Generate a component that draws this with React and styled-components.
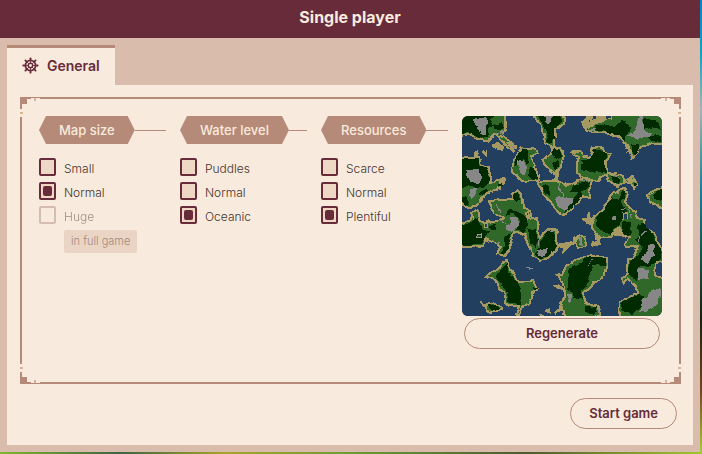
import React, { useState } from 'react';
import styled, { createGlobalStyle } from 'styled-components';

const GlobalStyle = createGlobalStyle`
    * {
        box-sizing: border-box;
    }
    body {
        margin: 0;
        font-family: Inter, "Liberation Sans", sans-serif;
        color: #45342f;
    }
`
const Scene = styled.div`
    display: flex;
    min-height: 100vh;
    padding: 0 2px 2px 0;
    background:
        linear-gradient(90deg, #83b52e, #3f6241 17%, #a7a52b 32%, #6f9a36 50%, #4c5a30 75%, #a3c62c) bottom / 100% 2px no-repeat,
        linear-gradient(#0087c5, #12a3bd 12%, #a3b4b9 24%, #177f95 42%, #14230f 70%, #71451c 86%, #a8cf3e);
`
const Dialog = styled.div`
    display: flex;
    flex-direction: column;
    flex: 1;
    background: #d9bcab;
`
const TitleBar = styled.header`
    display: flex;
    justify-content: center;
    height: 38px;
    background: #672b3a;
`
const Title = styled.h1`
    margin: 0;
    font-size: 16px;
    line-height: 34px;
    font-weight: 700;
    color: #f8eadd;
`
const Body = styled.main`
    display: flex;
    flex-direction: column;
    flex: 1;
    padding: 7px;
`
const Tab = styled.button`
    display: flex;
    align-items: center;
    align-self: flex-start;
    gap: 8px;
    height: 40px;
    padding: 0 15px 2px;
    border: 0;
    border-top: 3px solid #b68a78;
    background: #f8eadd;
    color: #672b3a;
    font: inherit;
    font-size: 14px;
    font-weight: 600;
`
const Panel = styled.section`
    display: flex;
    flex-direction: column;
    flex: 1;
    gap: 14px;
    padding: 12px 12px 16px 13px;
    background: #f8eadd;
`
const Frame = styled.div`
    position: relative;
    flex: 1;
    padding: 17px;
    border: 2px solid #b68a78;
`
const Corner = styled.svg`
    position: absolute;
    width: 20px;
    height: 20px;
    top: ${props => props.$bottom ? 'auto' : '-2px'};
    bottom: ${props => props.$bottom ? '-2px' : 'auto'};
    left: ${props => props.$right ? 'auto' : '-2px'};
    right: ${props => props.$right ? '-2px' : 'auto'};
    transform: scale(${props => props.$right ? -1 : 1}, ${props => props.$bottom ? -1 : 1});
`
const Settings = styled.div`
    display: grid;
    grid-template-columns: repeat(3, 1fr) 200px;
    gap: 14px;
`
const Group = styled.fieldset`
    min-width: 0;
    margin: 0;
    padding: 0;
    border: 0;
`
const Legend = styled.legend`
    display: flex;
    align-items: center;
    width: 100%;
    margin-bottom: 14px;
    padding: 0;
    &::after {
        content: '';
        flex: 1;
        height: 1px;
        background: #b68a78;
    }
`
const LegendText = styled.span`
    padding: 0 20px;
    font-size: 13px;
    line-height: 28px;
    font-weight: 500;
    white-space: nowrap;
    color: #f8eadd;
    background: #b68a78;
    clip-path: polygon(7px 0, calc(100% - 7px) 0, 100% 50%, calc(100% - 7px) 100%, 7px 100%, 0 50%);
`
const Options = styled.div`
    display: flex;
    flex-direction: column;
    align-items: flex-start;
    gap: 6px;
`
const Option = styled.label`
    display: flex;
    align-items: center;
    gap: 8px;
    height: 18px;
    font-size: 12px;
    font-weight: 300;
    opacity: ${props => props.$disabled ? 0.5 : 1};
`
const OptionText = styled.span`
    padding-top: 2px;
`
const Radio = styled.input`
    appearance: none;
    display: grid;
    place-content: center;
    width: 17px;
    height: 18px;
    margin: 0;
    border: 2px solid #672b3a;
    border-radius: 2px;
    background: #eed7c5;
    &:checked::before {
        content: '';
        width: 9px;
        height: 10px;
        border-radius: 2px;
        background: #672b3a;
    }
    &:disabled {
        border-color: #b48d90;
        background: #f8eadd;
    }
`
const Note = styled.span`
    margin-left: 25px;
    padding: 0 7px;
    border-radius: 2px;
    font-size: 11px;
    line-height: 23px;
    font-weight: 300;
    color: #a08a7d;
    background: #ead5c4;
`
const Preview = styled.div`
    display: flex;
    flex-direction: column;
    gap: 2px;
`
const MapImage = styled.svg`
    display: block;
    width: 100%;
    border-radius: 6px;
    background: #233f60;
`
const PillButton = styled.button`
    height: 31px;
    margin: 0 ${props => props.$wide ? '2px' : '4px'};
    padding: 0 18px 2px;
    border: 1px solid #b68a78;
    border-radius: 16px;
    background: transparent;
    color: #672b3a;
    font: inherit;
    font-size: 13px;
    font-weight: 600;
`
const Footer = styled.footer`
    display: flex;
    justify-content: flex-end;
`

const groups = [
    { name: 'Map size', options: ['Small', 'Normal', 'Huge'], selected: 'Normal', locked: 'Huge' },
    { name: 'Water level', options: ['Puddles', 'Normal', 'Oceanic'], selected: 'Oceanic' },
    { name: 'Resources', options: ['Scarce', 'Normal', 'Plentiful'], selected: 'Plentiful' }
]

const land = [
    '-3,-3 43,-3 43,14 40,19 55,31 51,36 43,29 38,21 31,19 25,25 18,24 13,21 6,18 -3,21',
    '-3,43 17,41 18,46 19,50 27,51 28,67 38,64 38,73 28,75 21,82 13,91 6,92 -3,86',
    '60,31 65,33 73,33 75,38 70,41 74,54 77,65 60,65 50,56 51,47 56,37',
    '71,-3 81,14 83,27 90,30 90,37 81,43 82,48 92,57 95,65 95,55 99,50 102,40 98,32 92,29 93,13 102,8 101,-3',
    '77,67 82,65 92,65 100,67 110,68 120,63 129,64 127,72 128,82 121,80 113,88 110,93 101,99 95,95 88,85 80,77',
    '121,7 128,-3 203,-3 203,29 190,27 180,31 175,36 170,42 167,34 163,27 156,21 150,19 143,16 133,16 125,15',
    '111,35 118,35 123,41 128,42 131,32 136,31 149,37 144,46 145,57 136,65 126,63 115,57 115,47 117,41 111,38',
    '145,57 160,59 161,64 171,61 176,69 172,72 169,67 161,66 155,71 146,64',
    '203,71 193,74 185,78 188,86 203,94',
    '158,73 163,72 166,78 163,85 168,92 173,95 175,103 182,105 183,112 192,117 195,125 203,137 203,146 194,147 193,161 203,164 203,203 158,203 157,187 175,176 175,171 165,162 161,166 160,161 166,157 165,144 170,142 176,131 164,131 163,127 167,122 160,120 157,112 148,120 138,122 130,113 130,103 142,92 150,80',
    '-3,109 8,103 13,96 16,102 22,107 35,105 42,102 37,100 32,97 26,85 52,83 50,78 55,74 59,78 61,93 68,95 70,102 76,103 75,115 78,121 86,113 95,115 94,122 97,130 88,141 80,144 71,141 65,126 63,117 52,117 48,128 47,135 43,140 35,138 38,131 33,127 23,123 22,131 -3,131',
    '125,139 146,141 145,147 141,162 133,166 122,177 123,187 136,191 138,197 130,203 103,203 99,191 103,176 100,166 95,159 101,159 105,149 118,142',
    '40,146 45,145 48,152 56,166 71,165 75,172 66,189 60,191 56,202 54,199 57,190 45,189 43,179 33,164 24,161 30,155 38,152',
    '23,187 33,187 40,192 31,197 25,196',
    '112,122 118,119 123,122 124,130 115,132',
    '16,94 9,98 12,105 18,103'
]
const sand = [
    '30,28 37,27 42,31 41,35 36,34 30,31',
    '12,36 16,34 17,39 13,43',
    '20,36 25,34 25,42 22,39',
    '36,64 41,61 45,62 44,69 38,72',
    '93,53 95,53 95,64 100,66 90,66 92,62',
    '87,31 94,29 99,33 92,34',
    '45,25 57,32 52,35 43,27',
    '120,7 126,-2 150,-2 150,2 142,6 134,8 124,12',
    '125,95 128,95 128,102 132,104 129,109 119,106 120,103 125,103',
    '95,128 110,125 115,121 118,121 110,129 104,133 100,139 101,132 94,131',
    '131,118 137,117 139,130 131,130 130,127 134,125',
    '155,113 161,119 156,120 151,118',
    '90,169 96,169 102,174 96,174',
    '91,196 101,190 102,193 93,199',
    '84,194 87,192 88,197 85,197',
    '18,185 25,187 26,189 22,191',
    '164,64 170,62 173,66 168,67',
    '62,96 67,96 69,104 64,102',
    '108,36 112,34 118,36 114,38',
    '145,57 153,59 158,61 150,61',
    '98,65 104,68 108,69 104,72',
    '77,197 82,198 81,201 78,201',
    '158,88 160,88 160,90 158,90'
]
const dark = [
    '-3,-3 34,-3 28,4 32,10 26,14 27,20 20,23 14,20 6,16 -3,19',
    '32,8 40,7 42,11 37,13 33,12',
    '-3,44 17,42 17,50 26,53 27,67 20,72 8,70 -3,73',
    '-3,78 4,81 8,88 4,90 -3,84',
    '17,78 23,72 27,74 20,80',
    '60,33 64,33 66,40 66,48 60,44 57,48 52,49 56,38',
    '68,52 73,53 76,63 70,64 66,60',
    '74,-3 99,-3 99,7 92,12 92,21 89,28 85,26 84,14',
    '92,32 98,34 100,41 94,44 90,38',
    '90,47 97,45 97,50 93,54',
    '83,68 87,70 88,80 82,76 79,72',
    '112,68 127,66 125,73 118,76 108,76',
    '118,75 121,79 113,88 109,92 101,97 104,92 111,86 112,81',
    '133,9 152,10 159,4 168,10 166,18 162,26 156,20 149,18 141,14 131,14',
    '168,29 177,29 178,32 173,39 170,38',
    '182,3 196,6 199,14 190,10 182,13',
    '184,21 199,20 199,26 188,25',
    '118,54 119,43 128,43 132,33 146,36 143,46 144,56 136,57 128,56',
    '149,61 158,64 157,69 152,67',
    '172,65 175,70 172,71',
    '190,78 199,73 203,76 203,85 193,82',
    '160,74 164,75 163,82 159,84 166,98 160,103 157,110 148,118 140,115 134,108 134,101 143,93 150,82 157,84',
    '176,108 182,107 190,118 200,136 198,145 188,149 177,152 175,165 167,160 167,145 175,140 181,131 173,124 177,119',
    '160,105 168,106 170,116 165,121 160,118',
    '158,188 176,177 182,180 179,191 170,198 161,194',
    '-3,110 8,106 16,102 20,112 28,115 22,122 20,129 -3,130',
    '51,82 52,77 56,76 58,84 54,86',
    '44,100 46,94 55,95 63,100 66,108 61,116 54,114 58,106 54,99 49,98',
    '42,120 50,117 47,128 45,137 40,138 42,129',
    '78,126 81,121 86,114 93,116 93,123 95,130 88,140 78,142 72,137 78,132',
    '66,112 74,115 76,125 73,133 68,128',
    '26,110 34,108 35,113 29,113',
    '125,140 145,142 142,150 131,149 130,154 127,165 119,176 121,182 113,183 106,172 107,153 118,148',
    '123,190 135,191 132,199 123,196',
    '38,154 46,147 47,155 54,165 58,173 60,188 48,187 45,178 39,166 34,162',
    '71,170 75,172 72,176',
    '26,188 33,189 37,193 31,196',
    '37,68 41,67 41,71 36,71'
]
const rock = [
    '10,2 24,1 27,7 24,12 24,19 20,20 15,12 11,8',
    '6,54 17,54 20,60 18,67 8,66 5,60',
    '8,73 15,71 14,79 10,84 7,81',
    '56,43 62,46 65,51 63,59 59,58 57,53',
    '82,-3 91,-3 90,7 86,9 83,5',
    '93,83 97,81 111,82 111,86 103,94 98,93',
    '178,-3 181,-3 182,14 189,17 187,21 180,20 176,25 171,20 165,20 173,14',
    '150,101 154,101 154,104 150,104',
    '48,101 55,101 57,108 50,116 43,113 43,109 49,107',
    '76,134 86,132 86,137 82,140 77,139',
    '188,129 192,128 192,139 185,147 180,143 183,137',
    '176,153 186,153 186,163 176,164',
    '191,173 199,172 199,179 194,189 184,197 177,196 181,184',
    '105,177 109,178 110,184 107,187',
    '129,12 134,10 133,15 129,14',
    '117,121 120,121 121,129 118,128'
]
const veins = [
    '32,19 38,17 42,12',
    '49,29 54,33',
    '97,66 96,73 100,76 100,82',
    '152,60 158,64',
    '37,105 46,108',
    '34,129 38,126',
    '76,120 77,130',
    '63,152 72,154',
    '127,149 132,144',
    '176,126 178,119 184,115',
    '158,95 166,93 171,102',
    '34,88 39,96',
    '119,66 127,64',
    '135,193 137,198',
    '84,114 90,116'
]
const lakes = [[163, 100, 3], [17, 120, 2], [65, 98, 2], [132, 2, 3], [147, 1, 3], [24, 109, 2], [127, 6, 2]]

const HelmIcon = () => (
    <svg width="17" height="17" viewBox="0 0 18 18" fill="none" stroke="currentColor" aria-hidden="true">
        <circle cx="9" cy="9" r="5.4" strokeWidth="1.9" />
        <circle cx="9" cy="9" r="2.3" strokeWidth="1.5" />
        {[0, 45, 90, 135, 180, 225, 270, 315].map((angle) => (
            <g key={angle} transform={`rotate(${angle} 9 9)`}>
                <path d="M9 6.5V1" strokeWidth="0.9" />
                <path d="M9 2.4V1.4" strokeWidth="2" strokeLinecap="round" />
            </g>
        ))}
    </svg>
)

const FrameCorner = (props) => (
    <Corner {...props} viewBox="0 0 20 20" shapeRendering="crispEdges" aria-hidden="true">
        <path fill="#f8eadd" d="M0 0h20v2H0zM0 0h2v20H0z" />
        <path fill="#b68a78" d="M0 0h11v2H7v5H2v5H0zM11 0h9v1h-9z" />
        <path fill="#d9b596" d="M14 1h2v3h-2zM0 15h3v2H0z" />
    </Corner>
)

const OptionGroup = ({ group, value, onChange }) => (
    <Group>
        <Legend><LegendText>{group.name}</LegendText></Legend>
        <Options>
            {group.options.map((option) => (
                <Option key={option} $disabled={option === group.locked}>
                    <Radio
                        type="radio"
                        name={group.name}
                        checked={value === option}
                        disabled={option === group.locked}
                        onChange={() => onChange(option)}
                    />
                    <OptionText>{option}</OptionText>
                </Option>
            ))}
            {group.locked && <Note>in full game</Note>}
        </Options>
    </Group>
)

const polygons = (shapes) => shapes.map((points) => <polygon key={points} points={points} />)

const MapPreview = ({ seed }) => (
    <MapImage viewBox="0 0 200 200" shapeRendering="crispEdges" role="img" aria-label="Map preview">
        <filter id="coast" x="0" y="0" width="200" height="200" filterUnits="userSpaceOnUse" colorInterpolationFilters="sRGB">
            <feTurbulence type="fractalNoise" baseFrequency="0.12" numOctaves="2" seed={seed} />
            <feDisplacementMap in="SourceGraphic" scale="5" xChannelSelector="R" yChannelSelector="G" />
        </filter>
        <g filter="url(#coast)">
            <rect x="-5" y="-5" width="210" height="210" fill="#233f60" />
            <g fill="#30682a" stroke="#a69a62" strokeWidth="2">{polygons(land)}</g>
            <g fill="#a69a62">{polygons(sand)}</g>
            <g fill="#002b00">{polygons(dark)}</g>
            <g fill="#878787">{polygons(rock)}</g>
            <g fill="none" stroke="#878787" strokeWidth="1">
                {veins.map((points) => <polyline key={points} points={points} />)}
            </g>
            <g fill="#233f60" stroke="#a69a62" strokeWidth="1">
                {lakes.map(([x, y, r]) => <circle key={`${x}-${y}`} cx={x} cy={y} r={r} />)}
            </g>
        </g>
    </MapImage>
)

const App = () => {
    const [values, setValues] = useState(groups.map((group) => group.selected));
    const [seed, setSeed] = useState(3);

    const select = (index, option) => {
        setValues(values.map((value, i) => i === index ? option : value));
    }

    return (
        <Scene>
            <GlobalStyle />
            <Dialog>
                <TitleBar><Title>Single player</Title></TitleBar>
                <Body>
                    <Tab type="button"><HelmIcon />General</Tab>
                    <Panel>
                        <Frame>
                            <FrameCorner />
                            <FrameCorner $right />
                            <FrameCorner $bottom />
                            <FrameCorner $right $bottom />
                            <Settings>
                                {groups.map((group, index) => (
                                    <OptionGroup
                                        key={group.name}
                                        group={group}
                                        value={values[index]}
                                        onChange={(option) => select(index, option)}
                                    />
                                ))}
                                <Preview>
                                    <MapPreview seed={seed} />
                                    <PillButton type="button" $wide onClick={() => setSeed(seed + 1)}>Regenerate</PillButton>
                                </Preview>
                            </Settings>
                        </Frame>
                        <Footer>
                            <PillButton type="button">Start game</PillButton>
                        </Footer>
                    </Panel>
                </Body>
            </Dialog>
        </Scene>
    );
}
export default App;
